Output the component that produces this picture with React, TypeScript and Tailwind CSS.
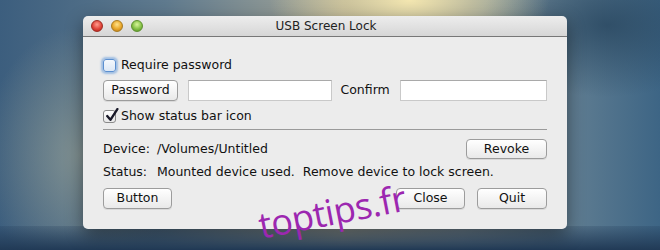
import React from "react";

const font = "font-['DejaVu_Sans',sans-serif]";

function MacButton({ label, className = "" }: { label: string; className?: string }) {
  return (
    <div
      className={`flex items-center justify-center rounded-[4px] border border-[#9c9c9c] bg-[linear-gradient(to_bottom,#ffffff,#f4f4f4_50%,#e9e9e9)] text-[12.5px] text-[#111] shadow-[0_1px_0_rgba(0,0,0,0.08)] ${className}`}
    >
      {label}
    </div>
  );
}

function TextField({ className = "" }: { className?: string }) {
  return (
    <div className={`h-[21px] border border-[#c9c9c9] border-t-[#a9a9a9] bg-white ${className}`} />
  );
}

function TrafficLight({ color }: { color: "red" | "yellow" | "green" }) {
  const cls =
    color === "red"
      ? "bg-[radial-gradient(circle_at_50%_35%,#ff9c8e,#e0443a_55%,#a91e16)] border-[#9c2a22]"
      : color === "yellow"
      ? "bg-[radial-gradient(circle_at_50%_35%,#ffe28a,#e9a72a_55%,#b0741a)] border-[#a77a1f]"
      : "bg-[radial-gradient(circle_at_50%_35%,#d8f59a,#85c146_55%,#4f8a24)] border-[#5d8f2e]";
  return <div className={`h-[12px] w-[12px] rounded-full border ${cls}`} />;
}

export default function App() {
  return (
    <div
      className={`relative h-[250px] w-[660px] overflow-hidden ${font} bg-[radial-gradient(ellipse_140px_70px_at_62%_0%,#f3e6b0_0%,rgba(230,215,160,0.6)_45%,transparent_100%),radial-gradient(ellipse_120px_160px_at_12%_62%,rgba(150,160,150,0.7),transparent_80%),radial-gradient(ellipse_160px_90px_at_92%_10%,rgba(40,70,95,0.8),transparent_80%),linear-gradient(to_right,#3c5e7e,#5f7a8e_25%,#a8a898_52%,#8a9aa0_70%,#3d6585)]`}
    >
      {/* bottom darker band */}
      <div className="absolute bottom-0 left-0 h-[24px] w-full bg-[linear-gradient(to_bottom,rgba(30,55,85,0.2),#213a56)]" />

      <div className="relative pl-[83px] pt-[16px]">
        <div className="w-[484px] overflow-hidden rounded-[5px] shadow-[0_6px_18px_rgba(0,0,0,0.45)]">
          {/* Title bar */}
          <div className="relative flex h-[21px] items-center border-b border-[#777] bg-[linear-gradient(to_bottom,#ededed,#d6d6d6)] pl-[8px]">
            <div className="flex gap-[8px]">
              <TrafficLight color="red" />
              <TrafficLight color="yellow" />
              <TrafficLight color="green" />
            </div>
            <div className="absolute inset-0 flex items-center justify-center pl-[2px] text-[12px] text-[#222]">
              USB Screen Lock
            </div>
          </div>

          {/* Body */}
          <div className="flex flex-col bg-[#ececec] px-[20px] pb-[20px] pt-[20px] text-[12.5px] text-[#111]">
            {/* Row 1 */}
            <div className="flex h-[16px] items-center">
              <div className="h-[13px] w-[13px] rounded-[3px] border border-[#5b8fd0] bg-[linear-gradient(to_bottom,#f4f8fd,#dde8f5)] shadow-[0_0_2px_2px_rgba(110,160,220,0.6)]" />
              <span className="ml-[5px]">Require password</span>
            </div>

            {/* Row 2 */}
            <div className="mt-[7px] flex h-[21px] items-center">
              <MacButton label="Password" className="h-[21px] w-[75px]" />
              <TextField className="ml-[10px] w-[145px]" />
              <span className="ml-[8px] w-[60px]">Confirm</span>
              <TextField className="w-[147px]" />
            </div>

            {/* Row 3 */}
            <div className="mt-[7px] flex h-[16px] items-center">
              <div className="relative h-[13px] w-[13px] rounded-[3px] border border-[#8a8a8a] bg-[linear-gradient(to_bottom,#ffffff,#e8e8e8)]">
                <svg viewBox="0 0 14 14" className="absolute -top-[3px] left-[0px] h-[15px] w-[15px]">
                  <path d="M3 7.5 L6 11 L12.5 1" fill="none" stroke="#1a1a2a" strokeWidth="2.2" strokeLinecap="round" strokeLinejoin="round" />
                </svg>
              </div>
              <span className="ml-[5px]">Show status bar icon</span>
            </div>

            {/* Separator */}
            <div className="mt-[5px] h-px w-full bg-[#9a9a9a]" />

            {/* Device row */}
            <div className="mt-[9px] flex h-[20px] items-center">
              <span className="w-[54px]">Device:</span>
              <span>/Volumes/Untitled</span>
              <MacButton label="Revoke" className="ml-auto h-[20px] w-[81px]" />
            </div>

            {/* Status row */}
            <div className="mt-[5px] flex h-[16px] items-center">
              <span className="w-[54px]">Status:</span>
              <span className="whitespace-pre">Mounted device used.  Remove device to lock screen.</span>
            </div>

            {/* Bottom buttons */}
            <div className="mt-[8px] flex h-[21px] items-center">
              <MacButton label="Button" className="h-[21px] w-[69px]" />
              <MacButton label="Close" className="ml-auto h-[21px] w-[69px]" />
              <MacButton label="Quit" className="ml-[12px] h-[21px] w-[70px]" />
            </div>
          </div>
        </div>
      </div>

      {/* Watermark */}
      <div className="absolute left-[259px] top-[208px] [transform-origin:left_center] [transform:rotate(-11deg)] font-['Open_Sans',sans-serif] text-[36px] leading-none tracking-[-0.5px] text-[#9c27b0]">
        toptips.fr
      </div>
    </div>
  );
}
